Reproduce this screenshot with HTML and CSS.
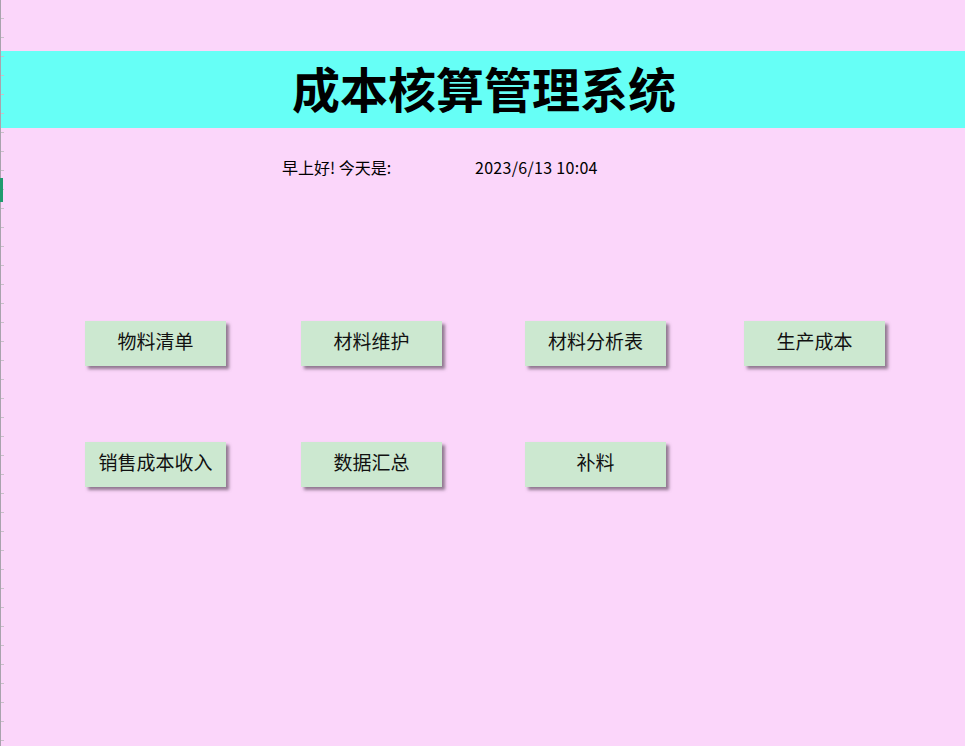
FILE: index.html
```html
<!DOCTYPE html>
<html lang="zh-CN">
<head>
<meta charset="utf-8">
<title>成本核算管理系统</title>
<link rel="stylesheet" href="styles.css">
</head>
<body>
<div class="rowbar"><span class="active-row"></span></div>
<main class="sheet">
  <header class="banner"><h1 class="title">成本核算管理系统</h1></header>
  <div class="greeting">
    <span class="greet-label">早上好! 今天是:</span>
    <span class="greet-date">2023/6/13 10:04</span>
  </div>
  <nav class="menu">
    <div class="cell"><button class="btn">物料清单</button></div>
    <div class="cell"><button class="btn">材料维护</button></div>
    <div class="cell"><button class="btn">材料分析表</button></div>
    <div class="cell"><button class="btn">生产成本</button></div>
    <div class="cell"><button class="btn">销售成本收入</button></div>
    <div class="cell"><button class="btn">数据汇总</button></div>
    <div class="cell"><button class="btn">补料</button></div>
  </nav>
</main>
</body>
</html>
```

FILE: styles.css
```css
html, body {
  margin: 0;
  padding: 0;
  height: 100%;
  background: #fbd6fa;
  font-family: "Noto Sans CJK SC", "Noto Sans", sans-serif;
  color: #000;
  overflow: hidden;
}
body {
  position: relative;
}
.rowbar {
  position: absolute;
  left: 0;
  top: 0;
  bottom: 0;
  width: 4px;
  border-left: 1px solid #a9a3ad;
  background-image: repeating-linear-gradient(to bottom, transparent 0, transparent 18px, #c9bfca 18px, #c9bfca 19px);
  background-size: 3px 100%;
  background-repeat: no-repeat;
  z-index: 2;
}
.active-row {
  position: absolute;
  left: -1px;
  top: 178px;
  width: 3px;
  height: 24px;
  background: #1f9b6e;
}
.sheet {
  padding-top: 51px;
}
.banner {
  height: 77px;
  background: #66fff6;
  display: flex;
  align-items: center;
  justify-content: center;
}
.title {
  margin: 0;
  font-size: 48px;
  font-weight: 700;
  line-height: 1;
  padding-left: 3px;
  padding-bottom: 6px;
}
.greeting {
  display: flex;
  padding-left: 282px;
  margin-top: 29px;
  font-size: 16px;
  line-height: 21px;
}
.greet-label {
  width: 193px;
}
.greet-date {
  letter-spacing: 0.3px;
}
.menu {
  display: grid;
  grid-template-columns: 216px 224px 219px 141px;
  grid-auto-rows: 45px;
  row-gap: 76px;
  padding-left: 85px;
  margin-top: 143px;
}
.btn {
  width: 141px;
  height: 45px;
  border: none;
  margin: 0;
  padding: 0;
  background: #cce8d0;
  box-shadow: 3px 3px 3px rgba(110, 90, 110, 0.75);
  font-family: "Noto Sans CJK SC", "Noto Sans", sans-serif;
  font-size: 19px;
  color: #111;
  line-height: 1;
  padding-bottom: 6px;
}
```
